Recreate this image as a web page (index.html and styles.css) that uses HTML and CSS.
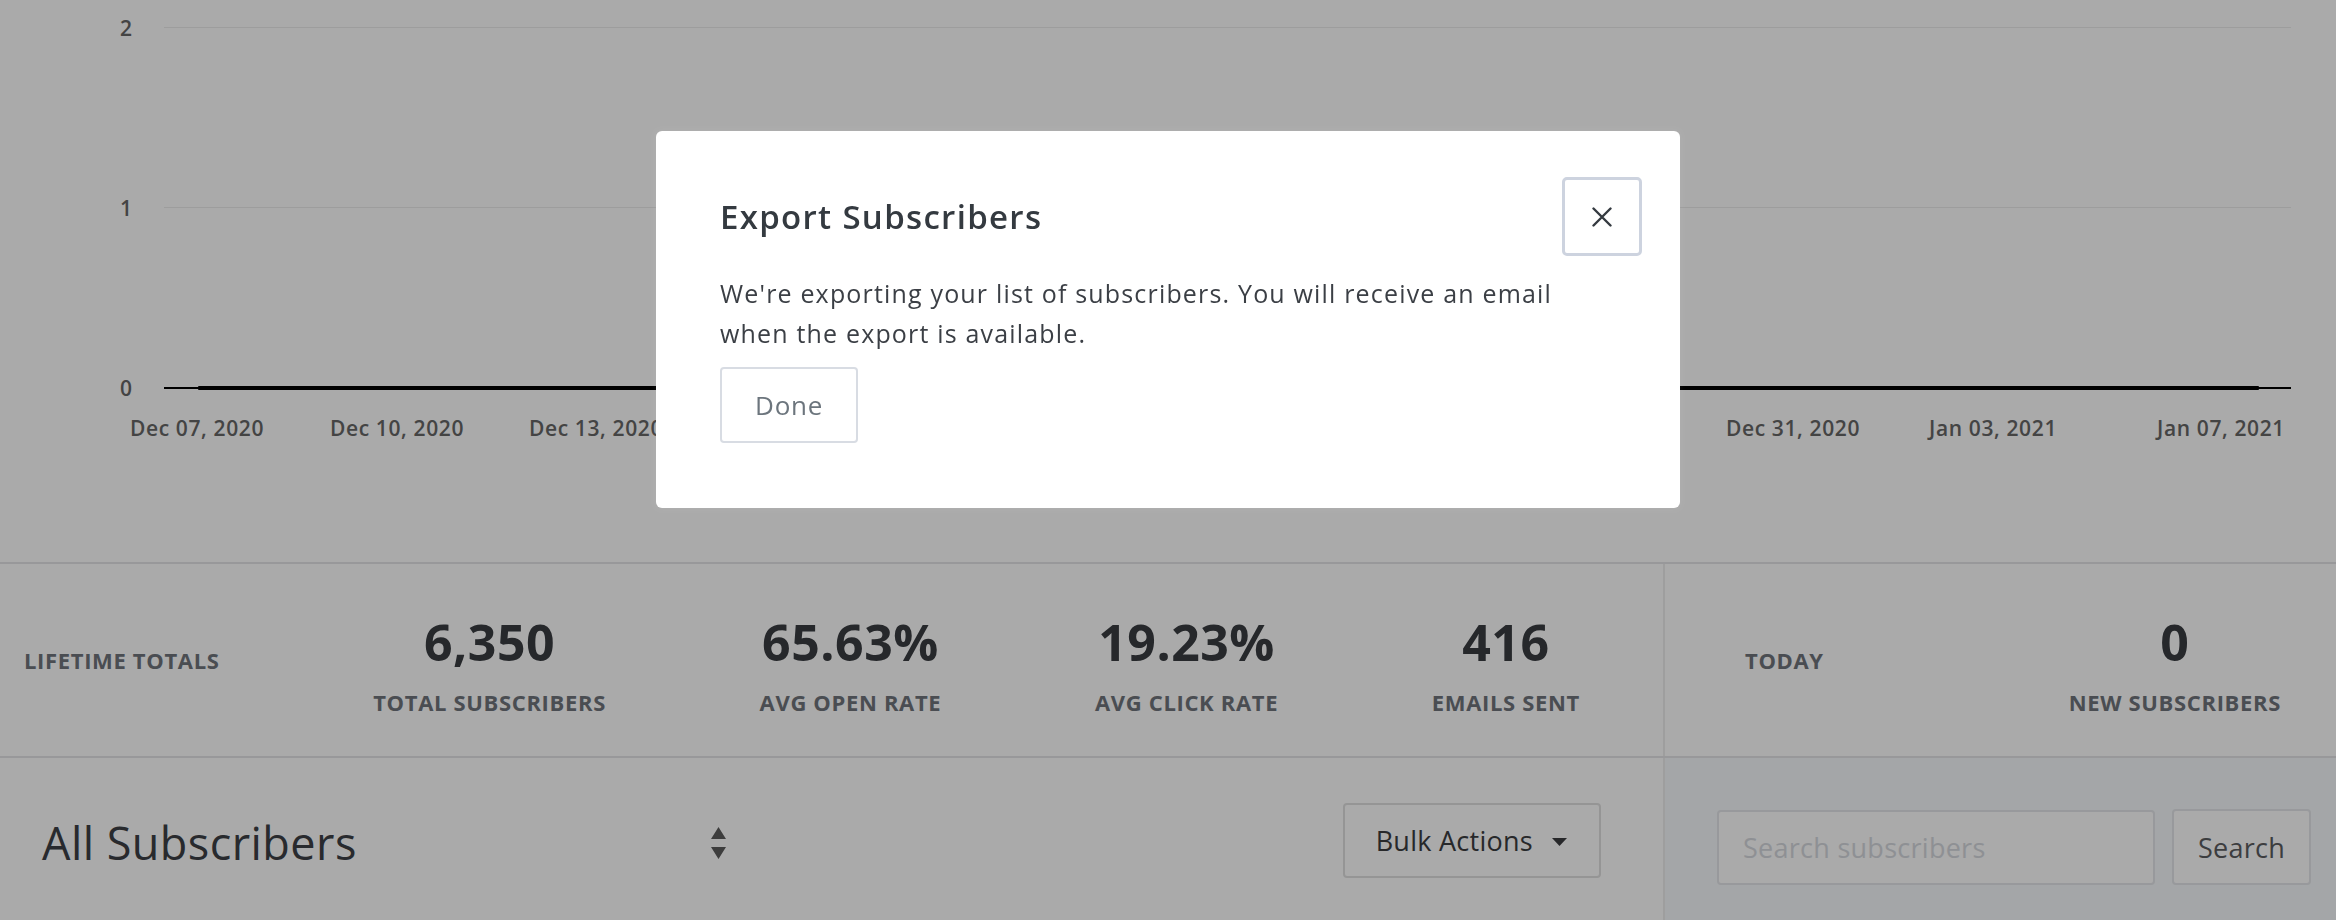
FILE: index.html
```html
<!DOCTYPE html>
<html lang="en">
<head>
<meta charset="utf-8">
<title>Subscribers</title>
<link rel="stylesheet" href="styles.css">
</head>
<body>
<div class="page">
  <section class="chart">
    <div class="gridline g2"></div>
    <div class="gridline g1"></div>
    <div class="ylabel y2">2</div>
    <div class="ylabel y1">1</div>
    <div class="ylabel y0">0</div>
    <div class="axis"></div>
    <div class="series"></div>
    <span class="xl" style="left:197px">Dec 07, 2020</span>
    <span class="xl" style="left:397px">Dec 10, 2020</span>
    <span class="xl" style="left:596px">Dec 13, 2020</span>
    <span class="xl" style="left:1793px">Dec 31, 2020</span>
    <span class="xl" style="left:1993px">Jan 03, 2021</span>
    <span class="xl xl-end" style="left:2285px">Jan 07, 2021</span>
  </section>

  <section class="stats">
    <div class="totals">
      <div class="stats-title">Lifetime Totals</div>
      <div class="stat"><div class="num">6,350</div><div class="lbl">Total Subscribers</div></div>
      <div class="stat"><div class="num">65.63%</div><div class="lbl">Avg Open Rate</div></div>
      <div class="stat"><div class="num">19.23%</div><div class="lbl">Avg Click Rate</div></div>
      <div class="stat"><div class="num">416</div><div class="lbl">Emails Sent</div></div>
    </div>
    <div class="today">
      <div class="stats-title">Today</div>
      <div class="stat"><div class="num">0</div><div class="lbl">New Subscribers</div></div>
    </div>
  </section>

  <section class="list-bar">
    <div class="list-left">
      <div class="select">
        <span class="select-text">All Subscribers</span>
        <svg class="arrows" width="15" height="32" viewBox="0 0 15 32"><path d="M7.5 0 L15 12 L0 12 Z M0 20 L15 20 L7.5 32 Z" fill="#5c5c5c"/></svg>
      </div>
      <button class="bulk">Bulk Actions <svg class="caret" width="15" height="8" viewBox="0 0 15 8"><path d="M0 0 L15 0 L7.5 8 Z" fill="#3b3c3f"/></svg></button>
    </div>
    <div class="list-right">
      <input class="search-input" type="text" placeholder="Search subscribers">
      <button class="search-btn">Search</button>
    </div>
  </section>
</div>

<div class="overlay">
  <div class="modal">
    <div class="modal-head">
      <h2 class="modal-title">Export Subscribers</h2>
      <button class="close-btn" aria-label="Close">
        <svg width="20" height="20" viewBox="0 0 20 20"><path d="M1.5 1.5 L18.5 18.5 M18.5 1.5 L1.5 18.5" stroke="#343a40" stroke-width="2.4" stroke-linecap="round"/></svg>
      </button>
    </div>
    <p class="modal-text">We're exporting your list of subscribers. You will receive an email when the export is available.</p>
    <button class="done-btn">Done</button>
  </div>
</div>
</body>
</html>
```

FILE: styles.css
```css
* { box-sizing: border-box; }

html, body {
  margin: 0;
  padding: 0;
  height: 100%;
  overflow: hidden;
}

body {
  font-family: "Open Sans", "Noto Sans", "Liberation Sans", sans-serif;
  background: #ffffff;
  color: #393c41;
}

/* ---------- chart ---------- */
.chart {
  position: relative;
  height: 562px;
}

.gridline {
  position: absolute;
  left: 164px;
  right: 45px;
  height: 1px;
  background: #ececec;
}
.g2 { top: 27px; }
.g1 { top: 207px; }

.ylabel {
  position: absolute;
  left: 96px;
  width: 36px;
  text-align: right;
  font-size: 21px;
  font-weight: 600;
  line-height: 26px;
  color: #666666;
}
.y2 { top: 15px; }
.y1 { top: 195px; }
.y0 { top: 375px; }

.axis {
  position: absolute;
  left: 164px;
  right: 45px;
  top: 387px;
  height: 2px;
  background: #000;
}
.series {
  position: absolute;
  left: 198px;
  width: 2061px;
  top: 386px;
  height: 4px;
  background: #000;
  border-radius: 1px;
}

.xl {
  position: absolute;
  top: 415px;
  transform: translateX(-50%);
  font-size: 21px;
  font-weight: 600;
  line-height: 26px;
  letter-spacing: 0.03em;
  color: #666666;
  white-space: nowrap;
}
.xl-end { transform: translateX(-100%); }

/* ---------- stats ---------- */
.stats {
  display: grid;
  grid-template-columns: 1fr 673px;
  border-top: 2px solid #e4e5e7;
  border-bottom: 2px solid #e4e5e7;
  height: 196px;
}

.totals {
  display: flex;
  align-items: center;
  justify-content: space-between;
  padding: 0 83px 0 24px;
}

.today {
  display: flex;
  align-items: center;
  justify-content: space-between;
  padding: 0 55px 0 80px;
  border-left: 2px solid #ededed;
}

.stats-title {
  font-size: 22px;
  font-weight: 700;
  line-height: 26px;
  letter-spacing: 0.03em;
  text-transform: uppercase;
  color: #6f747b;
}

.stat {
  display: flex;
  flex-direction: column;
  align-items: center;
}
.num {
  font-size: 50px;
  font-weight: 700;
  line-height: 58px;
  letter-spacing: 0.01em;
  color: #393c41;
  margin-top: 7px;
}
.lbl {
  margin-top: 18px;
  font-size: 22px;
  font-weight: 700;
  line-height: 26px;
  letter-spacing: 0.03em;
  text-transform: uppercase;
  color: #6f747b;
}

/* ---------- list bar ---------- */
.list-bar {
  display: grid;
  grid-template-columns: 1fr 673px;
  min-height: 200px;
}

.list-left {
  display: flex;
  align-items: flex-start;
  padding: 45px 62px 0 42px;
}

.select {
  display: flex;
  align-items: center;
  justify-content: space-between;
  width: 684px;
  height: 75px;
}
.select-text {
  font-size: 45px;
  line-height: 54px;
  letter-spacing: 0.01em;
  color: #3d4045;
  margin-top: 4px;
}
.arrows { margin-top: 5px; }

.bulk {
  margin-left: auto;
  display: flex;
  align-items: center;
  gap: 19px;
  height: 75px;
  padding: 0 32px 0 31px;
  border: 2px solid #e0e0e0;
  border-radius: 4px;
  background: #ffffff;
  font-family: inherit;
  font-size: 27px;
  letter-spacing: 0.01em;
  color: #3b3c3f;
}
.caret { margin-top: 2px; }

.list-right {
  display: flex;
  align-items: flex-start;
  gap: 17px;
  padding: 52px 25px 0 52px;
  background: #f7f9fc;
  border-left: 2px solid #ededed;
}

.search-input {
  flex: 1;
  min-width: 0;
  height: 75px;
  padding: 0 24px;
  border: 2px solid #e4e6ea;
  border-radius: 4px;
  background: #ffffff;
  font-family: inherit;
  font-size: 27px;
  letter-spacing: 0.01em;
  color: #3b3c3f;
}
.search-input::placeholder { color: #d6d9de; }

.search-btn {
  width: 139px;
  height: 76px;
  margin-top: -1px;
  border: 2px solid #e4e6ea;
  border-radius: 4px;
  background: #ffffff;
  font-family: inherit;
  font-size: 27px;
  letter-spacing: 0.01em;
  color: #5a5c5f;
  padding: 0;
}

/* ---------- modal ---------- */
.overlay {
  position: fixed;
  inset: 0;
  background: rgba(0, 0, 0, 0.333);
  display: flex;
  justify-content: center;
  align-items: flex-start;
  padding-top: 131px;
}

.modal {
  width: 1024px;
  background: #ffffff;
  border-radius: 6px;
  padding: 46px 64px 65px 64px;
  box-shadow: 0 0 6px rgba(255, 255, 255, 0.08);
}

.modal-head {
  display: flex;
  align-items: center;
  justify-content: space-between;
  margin-right: -26px;
}

.modal-title {
  margin: 0;
  font-size: 33px;
  font-weight: 600;
  line-height: 38px;
  letter-spacing: 0.04em;
  color: #343a40;
}

.close-btn {
  width: 80px;
  height: 79px;
  display: flex;
  align-items: center;
  justify-content: center;
  padding: 0;
  border: 3px solid #cdd3df;
  border-radius: 5px;
  background: #ffffff;
}

.modal-text {
  margin: 17px 0 14px 0;
  font-size: 25px;
  line-height: 40px;
  letter-spacing: 0.047em;
  color: #3b3f45;
}

.done-btn {
  height: 76px;
  padding: 0 33px;
  border: 2px solid #d8dce3;
  border-radius: 4px;
  background: #ffffff;
  font-family: inherit;
  font-size: 26px;
  letter-spacing: 0.03em;
  color: #6c757d;
}
```
